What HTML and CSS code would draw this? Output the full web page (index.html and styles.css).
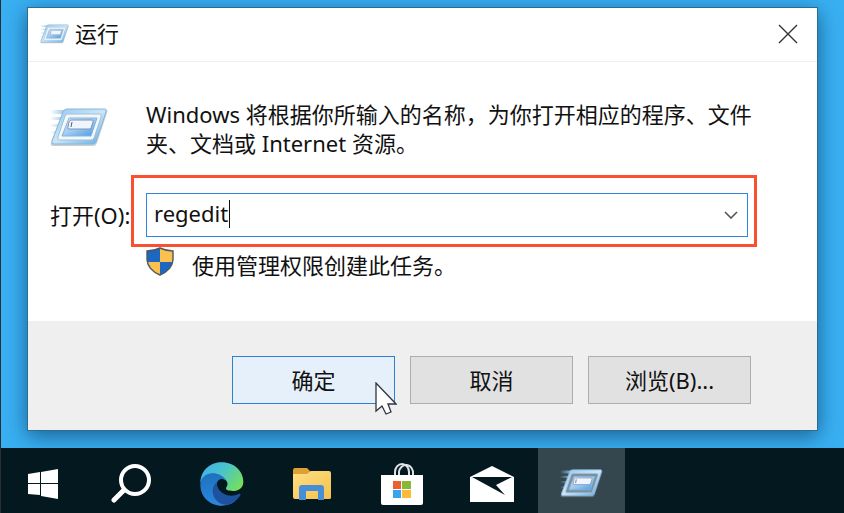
FILE: index.html
```html
<!DOCTYPE html>
<html lang="zh-CN">
<head>
    <meta charset="UTF-8">
    <meta name="viewport" content="width=device-width, initial-scale=1.0">
    <title>运行</title>
    <link rel="stylesheet" href="styles.css">
</head>
<body>
    <!-- shared "run" icon -->
    <svg class="defs" width="0" height="0" aria-hidden="true">
        <defs>
            <linearGradient id="frameFill" x1="0" y1="0" x2="1" y2="1">
                <stop offset="0" stop-color="#93c6ef"/>
                <stop offset="0.5" stop-color="#c9e6fa"/>
                <stop offset="1" stop-color="#5fa9e4"/>
            </linearGradient>
            <linearGradient id="screenFill" x1="0" y1="0" x2="1" y2="1">
                <stop offset="0" stop-color="#d5ebfb"/>
                <stop offset="0.5" stop-color="#9ccbf4"/>
                <stop offset="1" stop-color="#4497e4"/>
            </linearGradient>
            <linearGradient id="speedFill" x1="0" y1="0" x2="1" y2="0">
                <stop offset="0" stop-color="#8fc3ec" stop-opacity="0"/>
                <stop offset="1" stop-color="#8fc3ec"/>
            </linearGradient>
        </defs>
        <symbol id="runIcon" viewBox="0 0 58 39">
            <path d="M0 2h16l-1 4H0zM0 9h14l-1 3H0zM0 16h11l-1 3H0zM0 23h9l-1 3H0zM0 30h7l-1 3H0z" fill="url(#speedFill)"/>
            <path d="M17 2h39q2 0 1 3L47 35q-1 3-3 3H3q-3 0-2-3L13 5q1-3 4-3z" fill="#8195a5" opacity="0.45"/>
            <path d="M17 1h38q2 0 1 3L46 34q-1 2-3 2H4q-3 0-2-3L13 4q1-3 4-3z" fill="url(#frameFill)" stroke="#8db5d5"/>
            <path class="run-ring" d="M17 6h33q2 0 1 3l-7 21q-1 2-3 2H9q-2 0-1-3l7-21q1-2 2-2z"/>
            <path d="M19 10h28l-6 18H12z" fill="url(#screenFill)" stroke="#86b4df"/>
            <path d="M21 12h21q2 0 1 2l-2 6q0 1-2 1H19q-2 0-1-2l1-5q1-2 2-2z" fill="#eff5fc" stroke="#8790b2"/>
            <path d="M22 14l-1 5" stroke="#555d7c" stroke-width="1" fill="none"/>
        </symbol>
    </svg>

    <main class="desktop">
        <section class="dialog" role="dialog" aria-labelledby="dialogTitle">
            <header class="title-bar">
                <svg class="title-icon" aria-hidden="true"><use href="#runIcon"/></svg>
                <h1 id="dialogTitle">运行</h1>
                <button class="close" type="button" aria-label="关闭">
                    <svg width="20" height="20" viewBox="0 0 20 20" fill="none" stroke="#333" stroke-width="1.4"><path d="M1 1l18 18M19 1L1 19"/></svg>
                </button>
            </header>

            <form id="runForm">
                <div class="content">
                    <svg class="run-icon" aria-hidden="true"><use href="#runIcon"/></svg>
                    <p class="description">Windows 将根据你所输入的名称，为你打开相应的程序、文件夹、文档或 Internet 资源。</p>

                    <label for="command">打开(O):</label>
                    <div class="combo">
                        <input id="command" type="text" value="regedit" autocomplete="off" spellcheck="false">
                        <span class="caret"></span>
                        <button class="drop" type="button" aria-label="展开">
                            <svg width="14" height="8" viewBox="0 0 14 8" fill="none" stroke="#555" stroke-width="1.6"><path d="M1 1l6 6 6-6"/></svg>
                        </button>
                        <span class="highlight"></span>
                    </div>

                    <p class="admin">
                        <svg width="28" height="29" viewBox="0 0 28 29" aria-hidden="true">
                            <clipPath id="shieldClip"><path d="M14 1Q20 4 27 4V13Q26 23 14 28Q2 23 1 13V4Q8 4 14 1z"/></clipPath>
                            <g clip-path="url(#shieldClip)">
                                <path d="M0 0h14v15H0zM14 15h14v14H14z" fill="#1b67c2"/>
                                <path d="M14 0h14v15H14zM0 15h14v14H0z" fill="#fcc04f"/>
                            </g>
                            <path d="M14 1Q20 4 27 4V13Q26 23 14 28Q2 23 1 13V4Q8 4 14 1z" fill="none" stroke="#4d5861" stroke-width="1.4"/>
                        </svg>
                        使用管理权限创建此任务。
                    </p>
                </div>

                <footer class="actions">
                    <button class="btn primary" type="submit">确定
                        <svg class="cursor" width="22" height="33" viewBox="0 0 22 33" aria-hidden="true"><path d="M1 1V29L7 24L11 32L16 30L13 22H21z" fill="#fff" stroke="#30343f" stroke-width="1.3"/></svg>
                    </button>
                    <button class="btn" type="button">取消</button>
                    <button class="btn" type="button">浏览(B)...</button>
                </footer>
            </form>
        </section>
    </main>

    <nav class="taskbar">
        <button class="task start" type="button" aria-label="开始">
            <svg width="30" height="30" viewBox="0 0 30 30" fill="#fff"><path d="M0 5l12-2v11H0zM13 3l17-3v14H13zM0 15h12v11L0 25zM13 15h17v15l-17-3z"/></svg>
        </button>
        <button class="task" type="button" aria-label="搜索">
            <svg width="42" height="42" viewBox="0 0 42 42" fill="none" stroke="#fff" stroke-linecap="round"><circle cx="24" cy="17" r="14" stroke-width="4"/><path d="M13 27L3 37" stroke-width="5"/></svg>
        </button>
        <button class="task" type="button" aria-label="Edge">
            <svg width="44" height="44" viewBox="13 12 132 132">
                <linearGradient id="edgeTop" x1="0" y1="0.2" x2="1" y2="0.7">
                    <stop offset="0" stop-color="#3fb2ee"/>
                    <stop offset="0.45" stop-color="#49c3cb"/>
                    <stop offset="1" stop-color="#76df5c"/>
                </linearGradient>
                <linearGradient id="edgeSide" x1="0.4" y1="0" x2="0.5" y2="1">
                    <stop offset="0" stop-color="#1e72bd"/>
                    <stop offset="1" stop-color="#2b87df"/>
                </linearGradient>
                <path d="M14 74C16 34 46 13 78 13C118 13 143 42 143 71C143 90 128 99 112 99C97 99 88 96 92 88C100 77 94 64 80 62C62 36 24 48 14 74z" fill="url(#edgeTop)"/>
                <path d="M14 80C14 59 32 46 50 46C68 46 83 54 93 68C76 57 63 65 63 82C64 112 90 126 118 130C107 139 93 143 79 143C40 143 14 114 14 80z" fill="url(#edgeSide)"/>
                <path d="M63 72C47 86 48 112 62 127C74 141 93 143 104 138C119 132 130 119 134 112C136 108 132 106 128 109C99 121 63 105 63 72z" fill="#1d529e"/>
            </svg>
        </button>
        <button class="task" type="button" aria-label="文件资源管理器">
            <svg width="40" height="34" viewBox="0 0 40 34">
                <linearGradient id="folderFill" x1="0" y1="0" x2="1" y2="1">
                    <stop offset="0" stop-color="#ffdf86"/>
                    <stop offset="1" stop-color="#f4c14c"/>
                </linearGradient>
                <path d="M1 8V3q0-2 2-2h12l4 4v5H1z" fill="#dda033"/>
                <path d="M1 7h14l4-3h18q2 0 2 2v25q0 1-2 1H3q-2 0-2-2z" fill="url(#folderFill)"/>
                <path d="M7 33V21q0-3 3-3h19q3 0 3 3v12h-6v-9H14v9z" fill="#468fd6"/>
            </svg>
        </button>
        <button class="task" type="button" aria-label="Microsoft Store">
            <svg width="42" height="42" viewBox="0 0 42 42">
                <path d="M14 13V9a7 8 0 0 1 14 0v4M18 13V9a7 8 0 0 1 14 2v2" fill="none" stroke="#dfe3e5" stroke-width="2"/>
                <path d="M0 12h42v28q0 2-2 2H2q-2 0-2-2z" fill="#fff"/>
                <path d="M12 18h8v8h-8z" fill="#e8612f"/>
                <path d="M21 18h9v8h-9z" fill="#8ab834"/>
                <path d="M12 27h8v8h-8z" fill="#37a4ee"/>
                <path d="M21 27h9v8h-9z" fill="#fbbb37"/>
            </svg>
        </button>
        <button class="task" type="button" aria-label="邮件">
            <svg width="44" height="36" viewBox="0 0 44 36" fill="#fff"><path d="M0 11L22 0l22 11v25H0z"/><path d="M2 11h40L26 19l9 10z" fill="#03191f"/></svg>
        </button>
        <button class="task active" type="button" aria-label="运行">
            <svg class="task-run" aria-hidden="true"><use href="#runIcon"/></svg>
        </button>
    </nav>

    <script>
        const command = document.getElementById('command');

        document.getElementById('runForm').addEventListener('submit', function(e) {
            e.preventDefault();
            command.select();
        });

        // the drawn caret gives way to the native one
        command.addEventListener('focus', function() {
            document.querySelector('.caret').style.display = 'none';
        });
    </script>
</body>
</html>
```
FILE: styles.css
```css
* {
    box-sizing: border-box;
}

body {
    margin: 0;
    min-height: 100vh;
    display: flex;
    flex-direction: column;
    border-left: 1px solid #2b2d31;
    background-color: #39b0f3;
    color: #111;
    font-family: "Noto Sans", "Noto Sans CJK SC", sans-serif;
    font-size: 22px;
    line-height: 29px;
}

button, input {
    font: inherit;
    color: inherit;
}

button {
    padding: 0;
    border: none;
    background: none;
    cursor: pointer;
}

svg {
    display: block;
    flex: none;
}

.defs {
    position: absolute;
}

.run-ring {
    fill: var(--ring, #f3f7f8);
    stroke: #9fc1da;
}

.desktop {
    flex: 1;
    padding: 7px 26px 16px;
    overflow: hidden;
}

.dialog {
    border: 1px solid #2a6e8f;
    background-color: #fff;
    box-shadow: 0 5px 20px rgba(0, 30, 60, 0.55);
}

/* Title bar */
.title-bar {
    display: flex;
    align-items: center;
    height: 54px;
    padding: 0 19px 2px 12px;
    border-bottom: 1px solid #eee;
}

.title-icon {
    width: 29px;
    height: 20px;
    margin-right: 6px;
}

h1 {
    margin: 0;
    font-size: 22px;
    font-weight: normal;
}

.close {
    margin-left: auto;
}

/* Content */
.content {
    display: grid;
    grid-template-columns: 96px 1fr;
    padding: 38px 58px 41px 22px;
}

.run-icon {
    width: 58px;
    height: 39px;
    margin-top: 8px;
}

p {
    margin: 0;
}

.description {
    margin-bottom: 35px;
}

label {
    align-self: center;
    white-space: nowrap;
}

.combo {
    position: relative;
    display: flex;
    height: 44px;
    margin-right: 11px;
    border: 1px solid #2f86dc;
}

.combo input {
    flex: 1;
    min-width: 0;
    padding: 0 7px 3px;
    border: none;
    outline: none;
    background: none;
}

.caret {
    position: absolute;
    top: 6px;
    left: 82px;
    width: 1px;
    height: 28px;
    background-color: #111;
}

.drop {
    display: flex;
    align-items: center;
    justify-content: center;
    width: 32px;
}

.highlight {
    position: absolute;
    inset: -19px -10px -11px -16px;
    border: 3px solid #fa5030;
    pointer-events: none;
}

.admin {
    grid-column: 2;
    display: flex;
    align-items: center;
    gap: 18px;
    margin-top: 14px;
}

.admin svg {
    align-self: flex-start;
    margin-top: -4px;
}

/* Buttons */
.actions {
    display: flex;
    justify-content: flex-end;
    gap: 15px;
    padding: 35px 66px 26px;
    background-color: #efefef;
}

.btn {
    position: relative;
    width: 163px;
    height: 48px;
    border: 1px solid #adadad;
    background-color: #e1e1e1;
}

.btn.primary {
    border-color: #2b80d4;
    background-color: #e5f0fa;
}

.cursor {
    position: absolute;
    right: -3px;
    bottom: -12px;
}

/* Taskbar */
.taskbar {
    display: flex;
    gap: 3px;
    height: 65px;
    background-color: #03191f;
}

.task {
    display: flex;
    align-items: center;
    justify-content: center;
    width: 87px;
    padding-top: 6px;
}

.task.start {
    width: 84px;
}

.task.active {
    --ring: #7c929b;
    background-color: #35474e;
}

.task-run {
    width: 43px;
    height: 29px;
}
```
